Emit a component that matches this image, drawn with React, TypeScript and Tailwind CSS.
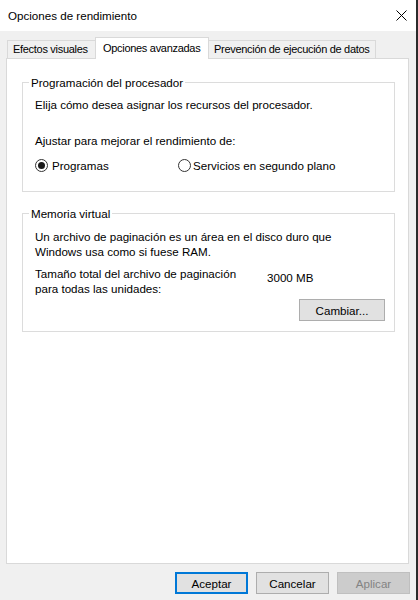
const font = "font-['Liberation_Sans',Arial,sans-serif]";

function Radio({ checked }: { checked?: boolean }) {
  return (
    <span className="w-[13px] h-[13px] rounded-full border border-[#333333] bg-white flex items-center justify-center shrink-0">
      {checked && <span className="w-[7px] h-[7px] rounded-full bg-[#1a1a1a]"></span>}
    </span>
  );
}

export default function App() {
  return (
    <div
      className={`${font} w-[418px] h-[600px] bg-[#f0f0f0] border-r-2 border-[#2b2b2b] flex flex-col text-black text-[11.6px] leading-[15px] whitespace-nowrap`}
    >
      {/* Title bar */}
      <div className="h-[31px] bg-white flex items-center justify-between pl-[8px] pr-[9px] shrink-0">
        <span>Opciones de rendimiento</span>
        <svg width="11" height="11" viewBox="0 0 11 11">
          <path d="M0.5 0.5 L10.5 10.5 M10.5 0.5 L0.5 10.5" stroke="#000" strokeWidth="1" fill="none" />
        </svg>
      </div>

      {/* Tabs */}
      <div className="flex items-end pl-[7px] mt-[6px] text-[11px] tracking-[-0.3px]">
        <div className="h-[18px] w-[88px] border-l border-t border-[#d9d9d9] flex items-center pl-[5px]">
          Efectos visuales
        </div>
        <div className="h-[22px] w-[114px] border-l border-t border-r border-[#d9d9d9] bg-white -mb-px relative z-10 flex items-center pl-[7px]">
          Opciones avanzadas
        </div>
        <div className="h-[18px] w-[167px] border-t border-r border-[#d9d9d9] flex items-center pl-[5px]">
          Prevención de ejecución de datos
        </div>
      </div>

      {/* Panel */}
      <div className="ml-[6px] w-[403px] h-[506px] border border-[#d9d9d9] bg-white pt-[16px] shrink-0">
        <fieldset className="ml-[15px] w-[373px] border border-[#dcdcdc] pl-[12px] pb-[18px]">
          <legend className="-ml-[6px] px-[2px]">Programación del procesador</legend>
          <div className="pt-[7px]">Elija cómo desea asignar los recursos del procesador.</div>
          <div className="mt-[21px]">Ajustar para mejorar el rendimiento de:</div>
          <div className="mt-[10px] flex items-center h-[15px]">
            <div className="w-[143px] flex items-center gap-[4px]">
              <Radio checked />
              <span>Programas</span>
            </div>
            <div className="flex items-center gap-[2px]">
              <Radio />
              <span>Servicios en segundo plano</span>
            </div>
          </div>
        </fieldset>

        <fieldset className="mt-[14px] ml-[15px] w-[373px] border border-[#dcdcdc] pl-[12px] pb-[10px] flex flex-col">
          <legend className="-ml-[6px] px-[2px]">Memoria virtual</legend>
          <div className="pt-[8px]">
            Un archivo de paginación es un área en el disco duro que
            <br />
            Windows usa como si fuese RAM.
          </div>
          <div className="mt-[7px] flex">
            <div className="w-[232px]">
              Tamaño total del archivo de paginación
              <br />
              para todas las unidades:
            </div>
            <div className="pt-[4px]">3000 MB</div>
          </div>
          <button className="mt-[3px] ml-auto mr-[9px] w-[86px] h-[22px] border border-[#adadad] bg-[#e1e1e1] flex items-center justify-center">
            Cambiar...
          </button>
        </fieldset>
      </div>

      {/* Dialog buttons */}
      <div className="mt-[8px] flex justify-end gap-[8px] pr-[6px]">
        <button className="w-[73px] h-[22px] border-2 border-[#0078d7] bg-[#e1e1e1] flex items-center justify-center">
          Aceptar
        </button>
        <button className="w-[73px] h-[22px] border border-[#adadad] bg-[#e1e1e1] flex items-center justify-center">
          Cancelar
        </button>
        <button className="w-[73px] h-[22px] border border-[#bfbfbf] bg-[#cccccc] text-[#838383] flex items-center justify-center">
          Aplicar
        </button>
      </div>
    </div>
  );
}
